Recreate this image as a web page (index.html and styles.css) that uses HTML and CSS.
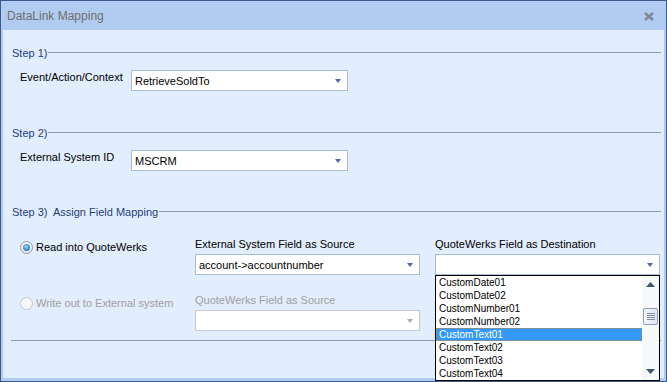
FILE: index.html
```html
<!DOCTYPE html>
<html lang="en">
<head>
  <meta charset="UTF-8" />
  <title>DataLink Mapping</title>
  <link rel="stylesheet" href="styles.css">
</head>
<body>
  <div class="window">
    <div class="titlebar">
      <span class="title">DataLink Mapping</span>
      <svg class="close" width="10" height="9" viewBox="0 0 10 9">
        <path d="M1 1 L9 8 M9 1 L1 8" stroke="#7b8797" stroke-width="2.4" />
      </svg>
    </div>

    <div class="client">
      <div class="legend"><span>Step 1)</span><i></i></div>
      <div class="field-row">
        <label>Event/Action/Context</label>
        <div class="combo wide">
          <span>RetrieveSoldTo</span>
          <svg class="arrow" width="6" height="4" viewBox="0 0 6 4"><path d="M0 0 H6 L3 4 Z" /></svg>
        </div>
      </div>

      <div class="legend step2"><span>Step 2)</span><i></i></div>
      <div class="field-row">
        <label>External System ID</label>
        <div class="combo wide">
          <span>MSCRM</span>
          <svg class="arrow" width="6" height="4" viewBox="0 0 6 4"><path d="M0 0 H6 L3 4 Z" /></svg>
        </div>
      </div>

      <div class="legend step3"><span>Step 3)  Assign Field Mapping</span><i></i></div>
      <div class="mapping">
        <div class="radio-cell"><span class="radio checked"></span>Read into QuoteWerks</div>
        <div class="cell">
          <div class="cap">External System Field as Source</div>
          <div class="combo">
            <span>account-&gt;accountnumber</span>
            <svg class="arrow" width="6" height="4" viewBox="0 0 6 4"><path d="M0 0 H6 L3 4 Z" /></svg>
          </div>
        </div>
        <div class="cell dest">
          <div class="cap">QuoteWerks Field as Destination</div>
          <div class="combo">
            <span></span>
            <svg class="arrow" width="6" height="4" viewBox="0 0 6 4"><path d="M0 0 H6 L3 4 Z" /></svg>
          </div>
          <div class="droplist">
            <ul class="items">
              <li>CustomDate01</li>
              <li>CustomDate02</li>
              <li>CustomNumber01</li>
              <li>CustomNumber02</li>
              <li class="selected">CustomText01</li>
              <li>CustomText02</li>
              <li>CustomText03</li>
              <li>CustomText04</li>
            </ul>
            <div class="scrollbar">
              <div class="sb-btn">
                <svg width="9" height="5" viewBox="0 0 9 5"><path d="M0 5 L4.5 0 L9 5 Z" /></svg>
              </div>
              <div class="sb-track">
                <div class="thumb"><b></b><b></b><b></b><b></b></div>
              </div>
              <div class="sb-btn">
                <svg width="9" height="5" viewBox="0 0 9 5"><path d="M0 0 L9 0 L4.5 5 Z" /></svg>
              </div>
            </div>
          </div>
        </div>

        <div class="radio-cell disabled"><span class="radio"></span>Write out to External system</div>
        <div class="cell disabled">
          <div class="cap">QuoteWerks Field as Source</div>
          <div class="combo">
            <span></span>
            <svg class="arrow" width="6" height="4" viewBox="0 0 6 4"><path d="M0 0 H6 L3 4 Z" /></svg>
          </div>
        </div>
        <div></div>
      </div>

      <div class="rule"></div>
    </div>
  </div>
</body>
</html>
```

FILE: styles.css
```css
body {
  margin: 0;
  padding: 0;
  font-family: "Liberation Sans", Arial, sans-serif;
  font-size: 11px;
  line-height: 13px;
  color: #000;
}

.window {
  width: 667px;
  height: 382px;
  box-sizing: border-box;
  border: 1px solid #3b5c8a;
  background-color: #b2ccf1;
  padding: 0 2px 3px;
  display: flex;
  flex-direction: column;
}

.titlebar {
  height: 28px;
  flex: none;
  display: flex;
  align-items: center;
  justify-content: space-between;
  padding: 1px 10px 0 4px;
}

.title {
  font-size: 12px;
  color: #6e6e6e;
}

.close {
  margin-top: 1px;
}

.client {
  flex: 1;
  background-color: #e2edfd;
  padding: 17px 3px 0 9px;
  position: relative;
}

/* group headers with the line running to the right */
.legend {
  display: flex;
  height: 13px;
  color: #1e3f7e;
  white-space: pre;
}

.legend i {
  flex: 1;
  height: 1px;
  margin: 5px 0 0 1px;
  background-color: #8597b2;
}

.step2 {
  margin-top: 36px;
}

.step3 {
  margin-top: 35px;
}

.field-row {
  display: grid;
  grid-template-columns: 111px 217px;
  margin: 10px 0 0 8px;
}

.field-row label {
  padding-top: 1px;
}

.combo {
  height: 21px;
  box-sizing: border-box;
  border: 1px solid #abbcd6;
  background-color: #fff;
  display: flex;
  align-items: center;
  justify-content: space-between;
  padding: 2px 6px 0 3px;
  line-height: 17px;
}

.combo span {
  white-space: nowrap;
}

.arrow {
  fill: #4a6aae;
  margin-top: -1px;
}

.mapping {
  display: grid;
  grid-template-columns: 160px 225px 225px;
  column-gap: 15px;
  row-gap: 19px;
  margin: 19px 0 0 8px;
}

.radio-cell {
  display: flex;
  align-items: center;
  padding-top: 3px;
  align-self: start;
  white-space: nowrap;
}

.radio {
  width: 13px;
  height: 13px;
  box-sizing: border-box;
  border-radius: 50%;
  border: 1px solid #8e9bad;
  background: radial-gradient(circle at 50% 40%, #ffffff, #dfe5ec);
  margin-right: 3px;
  position: relative;
}

.radio.checked::after {
  content: "";
  position: absolute;
  left: 2px;
  top: 2px;
  width: 7px;
  height: 7px;
  border-radius: 50%;
  background: radial-gradient(circle at 45% 40%, #a8dcf8, #3d8ccc 55%, #1d5c98);
}

.cap {
  height: 13px;
  margin-bottom: 3px;
  white-space: nowrap;
}

.disabled {
  color: #a0a0a0;
}

.disabled .radio {
  border-color: #c3c8ce;
  background: #f6f7f8;
}

.disabled .cap {
  margin-bottom: 3px;
}

.disabled .combo {
  border-color: #c6cbd2;
}

.disabled .arrow {
  fill: #bc9dbc;
}

.dest {
  position: relative;
}

/* open dropdown list */
.droplist {
  position: absolute;
  left: 0;
  top: 37px;
  width: 225px;
  height: 106px;
  box-sizing: border-box;
  border: 1px solid #000;
  background-color: #fff;
  display: flex;
  z-index: 2;
}

.items {
  list-style: none;
  margin: 0;
  padding: 0;
  flex: 1;
  font-size: 10px;
}

.items li {
  height: 13px;
  line-height: 13px;
  padding-left: 3px;
}

.items li.selected {
  background-color: #3399ff;
  color: #fff;
  outline: 1px dotted #c8843c;
  outline-offset: -1px;
}

.scrollbar {
  width: 17px;
  background-color: #f7f8fa;
  display: flex;
  flex-direction: column;
}

.sb-btn {
  height: 17px;
  display: flex;
  align-items: center;
  justify-content: center;
  fill: #3f5576;
}

.sb-track {
  flex: 1;
}

.thumb {
  width: 15px;
  height: 17px;
  box-sizing: border-box;
  margin: 15px 0 0 1px;
  border: 1px solid #8d9bb0;
  border-radius: 2px;
  background: linear-gradient(to right, #f4f7fb, #dfe6f0);
  display: flex;
  flex-direction: column;
  justify-content: center;
  align-items: center;
  gap: 1px;
}

.thumb b {
  width: 8px;
  height: 1px;
  background-color: #7f8ea5;
}

.rule {
  height: 1px;
  margin: 9px 0 0 -1px;
  background-color: #8597b2;
}
```
